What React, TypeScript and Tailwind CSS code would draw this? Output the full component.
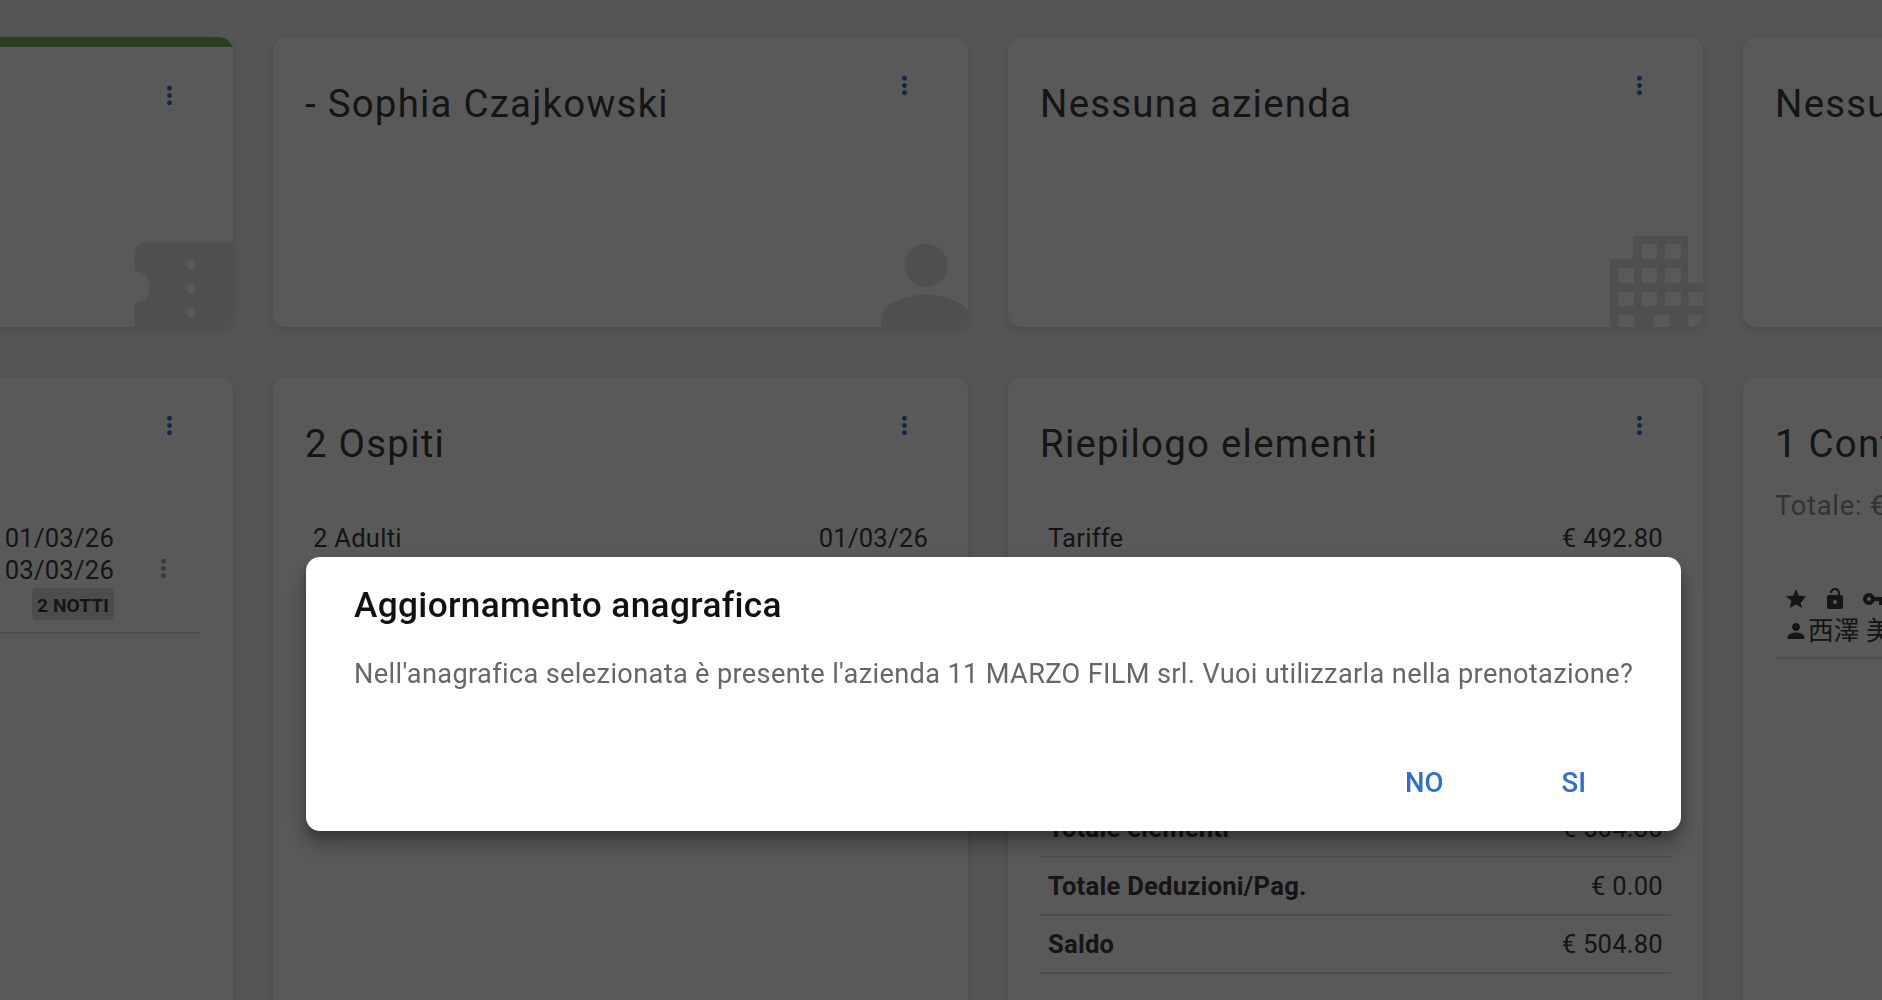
const MORE_VERT =
  'M12 8c1.1 0 2-.9 2-2s-.9-2-2-2-2 .9-2 2 .9 2 2 2zm0 2c-1.1 0-2 .9-2 2s.9 2 2 2 2-.9 2-2-.9-2-2-2zm0 6c-1.1 0-2 .9-2 2s.9 2 2 2 2-.9 2-2-.9-2-2-2z'
const TICKET =
  'M24 3.600H3.400c-1.100 0-2 1.100-2 2.400v3c1.600 0 2.900 1.300 2.900 3s-1.300 3-2.900 3v5c0 1.100.9 2 2 2H24V3.600zM12 6.900c-.5 0-.85.45-.85.9s.35.9.85.9.85-.45.85-.9-.35-.9-.85-.9zm0 4.500c-.5 0-.85.45-.85.9s.35.9.85.9.85-.45.85-.9-.35-.9-.85-.9zm0 4.500c-.5 0-.85.45-.85.9s.35.9.85.9.85-.45.85-.9-.35-.9-.85-.9z'
const PERSON =
  'M12 12c2.21 0 4-1.79 4-4s-1.79-4-4-4-4 1.79-4 4 1.79 4 4 4zm0 1.400c-2.800 0-8.300 1.400-8.300 4.600v2h16.600v-2c0-3.200-5.500-4.600-8.300-4.600z'
// drawn 1:1 in px, building is clipped by the card corner
const BUILDING =
  'M23 0H78V47H93V91H0V23H23Z M32 8H47V23H32Z M55 8H71V23H55Z M8.500 32H24V47H8.500Z M32 32H47V47H32Z M55 32H71V47H55Z M8.500 56H24V70H8.500Z M32 56H47V70H32Z M55 56H71V70H55Z M78.500 56H93V70H78.500Z M8.500 79H24V91H8.500Z M44 79H59V91H44Z M78.500 79H93V91H78.500Z'
const STAR = 'M12 17.27L18.18 21l-1.64-4.73L22 9.24l-7.19-.61L12 2 9.19 8.63 2 9.24l5.46 4.73L5.82 21z'
const LOCK_OPEN =
  'M18 8h-1V6c0-2.76-2.24-5-5-5S7 3.24 7 6h1.9c0-1.71 1.39-3.1 3.1-3.1 1.71 0 3.1 1.39 3.1 3.1v2H6c-1.1 0-2 .9-2 2v10c0 1.1.9 2 2 2h12c1.1 0 2-.9 2-2V10c0-1.1-.9-2-2-2zm-6 9c-1.1 0-2-.9-2-2s.9-2 2-2 2 .9 2 2-.9 2-2 2z'
const KEY =
  'M12.65 10C11.83 7.67 9.61 6 7 6c-3.31 0-6 2.69-6 6s2.69 6 6 6c2.61 0 4.83-1.67 5.65-4H17v4h4v-4h2v-4H12.65zM7 14c-1.1 0-2-.9-2-2s.9-2 2-2 2 .9 2 2-.9 2-2 2z'

function Icon({ d, className, viewBox = '0 0 24 24' }: { d: string; className?: string; viewBox?: string }) {
  return (
    <svg viewBox={viewBox} fill="currentColor" className={className}>
      <path d={d} fillRule="evenodd" />
    </svg>
  )
}

function Card({
  title,
  bar,
  watermark,
  className,
  children,
}: {
  title: string
  bar?: boolean
  watermark?: React.ReactNode
  className?: string
  children?: React.ReactNode
}) {
  return (
    <div
      className={`relative w-[695px] shrink-0 overflow-hidden rounded-[14px] bg-white shadow-[0_4px_12px_rgba(0,0,0,0.12)] ${className ?? ''}`}
    >
      {bar && <div className="h-[10px] bg-[#7fb35f]" />}
      <div className="flex items-start justify-between pl-[32px] pr-[49px] pt-[33px]">
        <div className="h-[67px] pt-[4px] text-[38.400px] leading-[60px] tracking-[1.250px] text-[#3c3c3c] whitespace-nowrap">
          {title}
        </div>
        <Icon d={MORE_VERT} className="mt-[0.5px] h-[29px] w-[29px] text-[#2f6fd0]" />
      </div>
      {children}
      {watermark}
    </div>
  )
}

function SummaryRow({ label, value, bold }: { label?: string; value?: string; bold?: boolean }) {
  return (
    <div className="flex h-[58px] items-center justify-between border-b-[2px] border-[#e0e0e0] px-[8px] text-[25.600px] tracking-[0.240px] text-[#3c3c3c]">
      <span className={bold ? 'font-bold' : ''}>{label}</span>
      <span>{value}</span>
    </div>
  )
}

export default function App() {
  return (
    <div className="h-screen overflow-hidden bg-[#f3f3f3] font-['Roboto',sans-serif]">
      <div className="ml-[-462px] flex flex-col gap-[50px] pt-[37px]">
        {/* Top row */}
        <div className="flex gap-[40px]">
          <Card
            title=""
            bar
            className="h-[290px]"
            watermark={
              <Icon d={TICKET} className="absolute -bottom-[24px] -right-[22px] h-[128px] w-[128px] text-[#e2e2e2]" />
            }
          />
          <Card
            title="- Sophia Czajkowski"
            className="h-[290px]"
            watermark={
              <Icon d={PERSON} className="absolute -bottom-[25px] -right-[23px] h-[130px] w-[130px] text-[#e2e2e2]" />
            }
          />
          <Card
            title="Nessuna azienda"
            className="h-[290px]"
            watermark={
              <Icon
                d={BUILDING}
                viewBox="0 0 93 91"
                className="absolute bottom-0 right-0 h-[91px] w-[93px] text-[#e2e2e2]"
              />
            }
          />
          <Card title="Nessuna agenzia" className="h-[290px]" />
        </div>

        {/* Bottom row */}
        <div className="flex gap-[40px]">
          <Card title="" className="h-[700px]">
            <div className="mx-[32px] mt-[32px] flex justify-end gap-[35px] border-b-[2px] border-[#e0e0e0] pb-[12px] pr-[23px] pt-[13px]">
              <div className="flex flex-col items-end text-[25.600px] leading-[32px] tracking-[0.240px] text-[#3c3c3c]">
                <span>01/03/26</span>
                <span>03/03/26</span>
                <span className="mt-[2px] flex h-[32px] w-[82px] items-center justify-center rounded-[5px] bg-[#dadada] pt-[3px] text-[19.200px] font-bold leading-none tracking-[0.100px]">
                  2 NOTTI
                </span>
              </div>
              <Icon d={MORE_VERT} className="mt-[32px] h-[29px] w-[29px] text-[#a5a5a5]" />
            </div>
          </Card>

          <Card title="2 Ospiti" className="h-[700px]">
            <div className="mx-[32px] mt-[33px]">
              <SummaryRow label="2 Adulti" value="01/03/26" />
            </div>
          </Card>

          <Card title="Riepilogo elementi" className="h-[700px]">
            <div className="mx-[32px] mt-[33px]">
              <SummaryRow label="Tariffe" value="€ 492.80" />
              <SummaryRow />
              <SummaryRow />
              <SummaryRow />
              <SummaryRow />
              <SummaryRow label="Totale elementi" value="€ 504.80" bold />
              <SummaryRow label="Totale Deduzioni/Pag." value="€ 0.00" bold />
              <SummaryRow label="Saldo" value="€ 504.80" bold />
            </div>
          </Card>

          <Card title="1 Contatto" className="h-[700px]">
            <div className="mt-[13px] pl-[32px] text-[27.200px] leading-[32px] tracking-[0.800px] text-[#929292]">
              Totale: € 0.00
            </div>
            <div className="mx-[32px] mt-[65px] border-b-[2px] border-[#e0e0e0] pb-[10px] pl-[9px] text-[#3c3c3c]">
              <div className="flex gap-[15px]">
                <Icon d={STAR} className="h-[24px] w-[24px]" />
                <Icon d={LOCK_OPEN} className="h-[24px] w-[24px]" />
                <Icon d={KEY} className="h-[24px] w-[24px]" />
              </div>
              <div className="mt-[4px] flex items-center whitespace-nowrap font-['Roboto','Noto_Sans_CJK_JP',sans-serif] text-[25.600px] leading-[32px] tracking-[0.240px]">
                <Icon d={PERSON} className="h-[24px] w-[24px]" />
                <span>西澤 美</span>
              </div>
            </div>
          </Card>
        </div>
      </div>

      {/* Backdrop + dialog */}
      <div className="fixed inset-0 bg-black/65 pl-[306px] pt-[557px]">
        <div className="flex h-[274px] w-[1375px] flex-col rounded-[14px] bg-white shadow-[0_13px_24px_rgba(0,0,0,0.3),0_6px_10px_rgba(0,0,0,0.2)]">
          <h2 className="pl-[48px] pt-[25px] text-[35.200px] font-medium leading-[46px] tracking-[0.360px] text-[#111]">
            Aggiornamento anagrafica
          </h2>
          <p className="pl-[48px] pt-[26px] text-[27.200px] leading-[40px] tracking-[0.340px] text-[#666]">
            Nell'anagrafica selezionata è presente l'azienda 11 MARZO FILM srl. Vuoi utilizzarla nella prenotazione?
          </p>
          <div className="mt-auto flex justify-end gap-[118px] pb-[28px] pr-[95px] text-[27.500px] font-medium leading-[40px] text-[#2f6fd0]">
            <button type="button">NO</button>
            <button type="button">SI</button>
          </div>
        </div>
      </div>
    </div>
  )
}
